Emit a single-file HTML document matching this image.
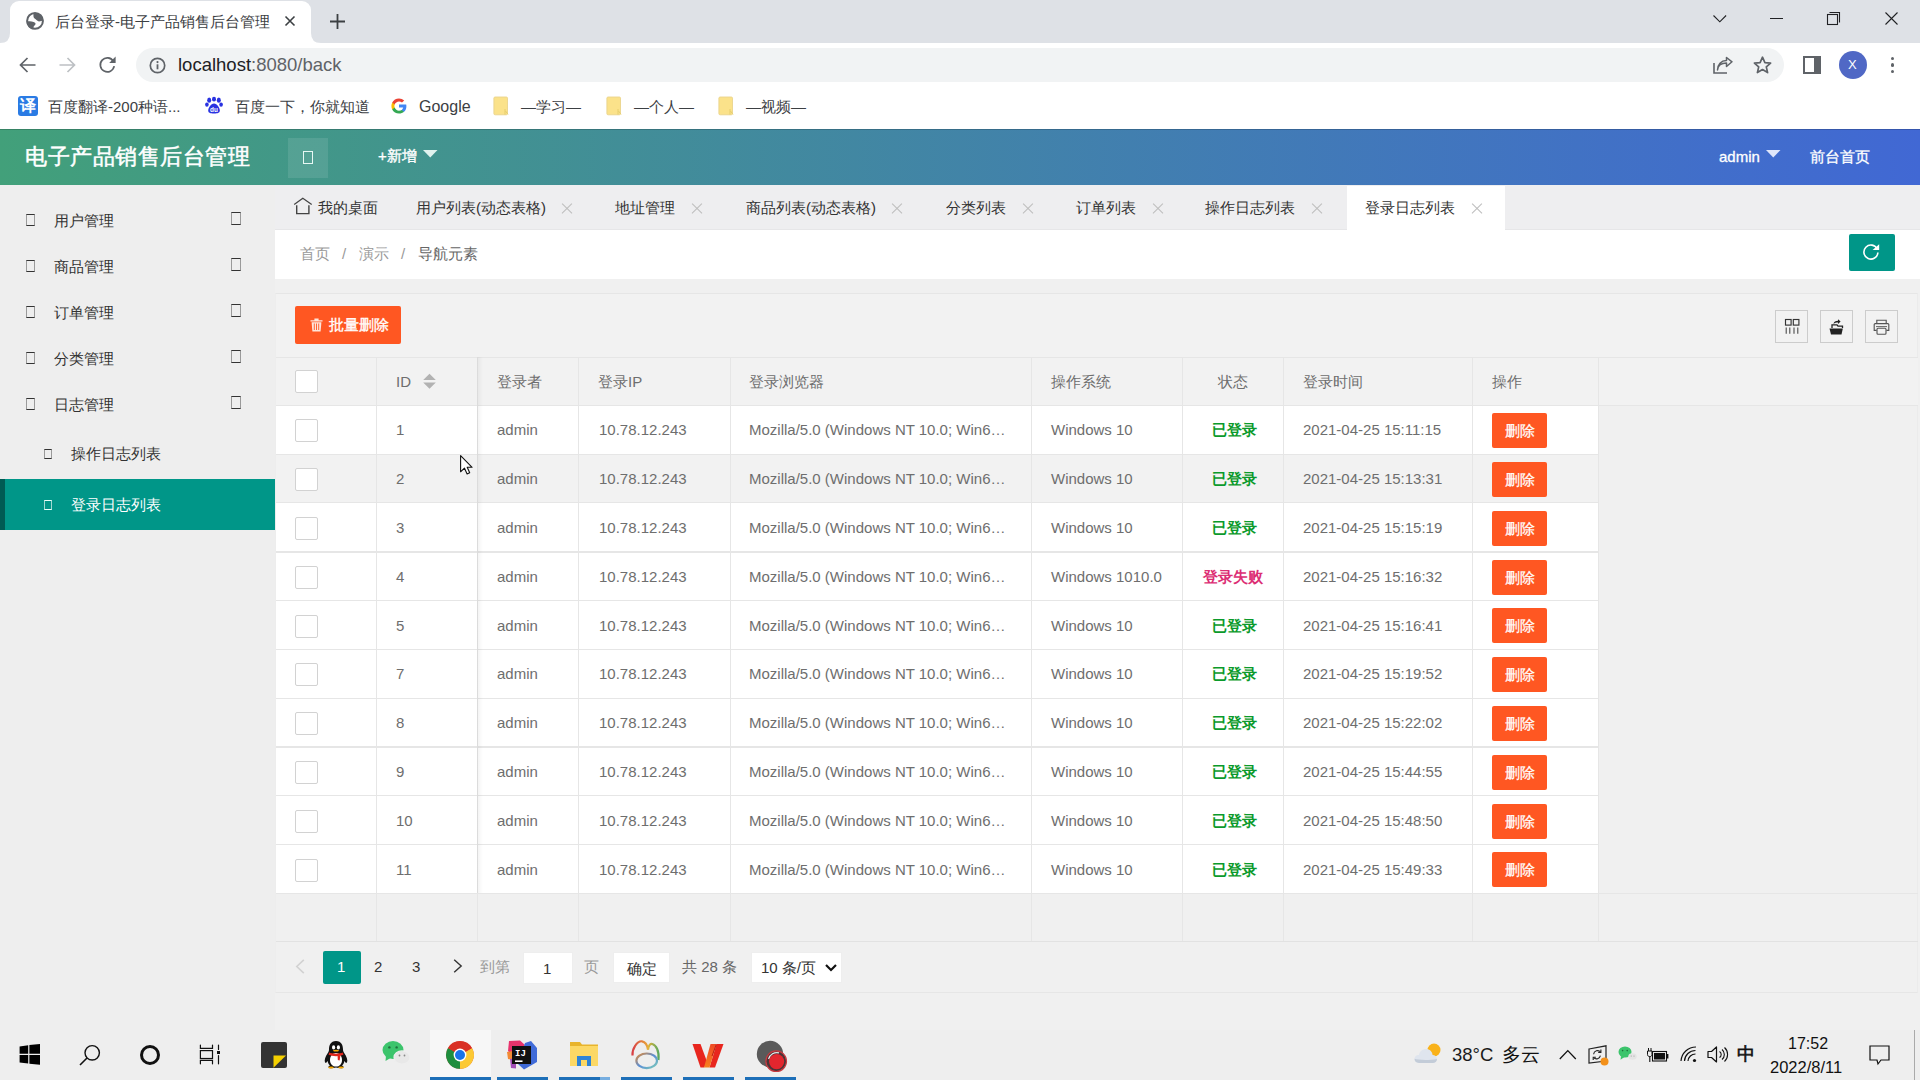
<!DOCTYPE html><html><head><meta charset="utf-8"><title>后台登录-电子产品销售后台管理</title><style>
*{box-sizing:border-box;margin:0;padding:0}
html,body{width:1920px;height:1080px;overflow:hidden;background:#f0f0f0}
body{position:relative;font-family:"Liberation Sans",sans-serif;color:#333}
.abs{position:absolute}
.t{position:absolute;white-space:nowrap;line-height:1}
svg{position:absolute;overflow:visible}
/* chrome */
#tabstrip{left:0;top:0;width:1920px;height:43px;background:#dee1e6}
#acttab{left:10px;top:1px;width:301px;height:42px;background:#fff;border-radius:9px 9px 0 0}
#toolbar{left:0;top:43px;width:1920px;height:44px;background:#fff}
#omni{left:136px;top:48px;width:1648px;height:34px;border-radius:17px;background:#f1f3f4}
#bmbar{left:0;top:87px;width:1920px;height:42px;background:#fff}
.ui{color:#3c4043}
/* header */
#hdr{left:0;top:129px;width:1920px;height:56px;background:linear-gradient(to right,#42a07a 0%,#4168d4 100%)}
#sidebar{left:0;top:185px;width:275px;height:845px;background:#eeeeee}
#tabbar{left:275px;top:185px;width:1645px;height:45px;background:#eeeef0;border-bottom:1px solid #e6e6e8}
#crumb{left:275px;top:230px;width:1645px;height:49px;background:#fff}
.x{position:absolute;width:12px;height:12px}
.x:before,.x:after{content:"";position:absolute;left:-1px;top:5.5px;width:14px;height:1.2px;background:#bdbdbd;transform:rotate(45deg)}
.x:after{transform:rotate(-45deg)}
.ibox{position:absolute;border-top:1.4px solid #333;border-bottom:1.4px solid #333;border-left:1.1px solid #9a9a9a;border-right:1.1px solid #9a9a9a}
/* table */
.cell{position:absolute;white-space:nowrap;font-size:15px;color:#6e6e6e;line-height:50px;height:50px}
.vl{position:absolute;width:1px;background:#e6e6e6}
.hl{position:absolute;height:1px;background:#e6e6e6}
.cb{position:absolute;width:23px;height:23px;background:#fff;border:1px solid #d2d2d2;border-radius:2px}
.del{position:absolute;width:55px;height:35px;background:#ff5722;border-radius:2px;color:#fff;font-size:15px;line-height:35px;text-align:center;-webkit-text-stroke:0.25px #fff}
.tb{position:absolute;width:33px;height:33px;border:1px solid #ccc}
</style></head><body>
<div id="tabstrip" class="abs"></div>
<div id="acttab" class="abs"></div>
<svg style="left:0;top:33px" width="12" height="10"><path d="M0 10 Q10 10 10 0 L10 10 Z" fill="#fff"/></svg>
<svg style="left:311px;top:33px" width="10" height="10"><path d="M0 0 Q0 10 10 10 L0 10 Z" fill="#fff"/></svg>
<svg style="left:26px;top:12px" width="18" height="18" viewBox="0 0 18 18"><circle cx="9" cy="8.9" r="7.9" stroke="#5f6368" stroke-width="2" fill="none"/><path d="M7.6 1.2 C7.2 3.5 7.4 5.8 8.6 6.6 C10 7.6 11.5 9.3 13 9.4 C14.5 9.4 16 9 17.4 8.6 C17 4.5 13.5 1 9 0.9 Z" fill="#5f6368"/><path d="M0.7 9.6 C2.8 9 5.6 9.1 7.6 9.9 C9.2 10.5 9.9 11.4 9.4 12.4 C8.6 13.6 7.4 14.2 7.4 15.4 L7.4 17.6 C3.6 16.9 0.8 13.6 0.7 9.6Z" fill="#5f6368"/></svg>
<div class="t" style="left:55px;top:14px;font-size:15px;color:#3c4043">后台登录-电子产品销售后台管理</div>
<svg style="left:285px;top:16px" width="10" height="10"><path d="M0.5 0.5L9.5 9.5M9.5 0.5L0.5 9.5" stroke="#3c4043" stroke-width="1.6"/></svg>
<svg style="left:330px;top:14px" width="15" height="15"><path d="M7.5 0V15M0 7.5H15" stroke="#3c4043" stroke-width="1.8"/></svg>
<svg style="left:1713px;top:15px" width="14" height="8"><path d="M0.5 0.5L6.8 6.8L13.1 0.5" stroke="#202124" stroke-width="1.1" fill="none"/></svg>
<div class="abs" style="left:1770px;top:18px;width:13px;height:1.2px;background:#202124"></div>
<svg style="left:1826px;top:11px" width="16" height="15"><path d="M3.5 1.5H13.5V11.5" stroke="#202124" stroke-width="1.1" fill="none"/><rect x="1.5" y="3.5" width="10" height="10" stroke="#202124" stroke-width="1.1" fill="none"/></svg>
<svg style="left:1885px;top:12px" width="13" height="13"><path d="M0.5 0.5L12.5 12.5M12.5 0.5L0.5 12.5" stroke="#202124" stroke-width="1.1"/></svg>
<div id="toolbar" class="abs"></div>
<div id="omni" class="abs"></div>
<svg style="left:19px;top:57px" width="17" height="16" viewBox="0 0 17 16"><path d="M16.5 8H2M8.5 1L1.5 8L8.5 15" stroke="#5f6368" stroke-width="1.7" fill="none"/></svg>
<svg style="left:59px;top:57px" width="17" height="16" viewBox="0 0 17 16"><path d="M0.5 8H15M8.5 1L15.5 8L8.5 15" stroke="#bdc0c4" stroke-width="1.7" fill="none"/></svg>
<svg style="left:99px;top:56px" width="18" height="17" viewBox="0 0 18 17"><path d="M14.3 5.2 A7 7 0 1 0 15.2 10.2" stroke="#5f6368" stroke-width="1.7" fill="none"/><path d="M16.6 0.6V7H10.2Z" fill="#5f6368"/></svg>
<svg style="left:149px;top:57px" width="17" height="17" viewBox="0 0 17 17"><circle cx="8.5" cy="8.5" r="7.2" stroke="#5f6368" stroke-width="1.7" fill="none"/><rect x="7.6" y="7.3" width="1.8" height="5" fill="#5f6368"/><circle cx="8.5" cy="5.1" r="1.1" fill="#5f6368"/></svg>
<div class="t" style="left:178px;top:56px;font-size:18.5px;color:#202124">localhost<span style="color:#5f6368">:8080/back</span></div>
<svg style="left:1713px;top:57px" width="20" height="17" viewBox="0 0 20 17"><path d="M1 6V16H14" stroke="#5f6368" stroke-width="1.6" fill="none"/><path d="M4.5 13 C5 8 8.5 6 13.5 6V9.5L19 4.8L13.5 0.5V3.6C8 3.6 4.6 7.5 4.5 13Z" stroke="#5f6368" stroke-width="1.5" fill="none" stroke-linejoin="round"/></svg>
<svg style="left:1753px;top:56px" width="19" height="18" viewBox="0 0 19 18"><path d="M9.5 1.2L11.9 6.6L17.6 7.1L13.3 10.9L14.6 16.6L9.5 13.6L4.4 16.6L5.7 10.9L1.4 7.1L7.1 6.6Z" stroke="#5f6368" stroke-width="1.7" fill="none" stroke-linejoin="round"/></svg>
<svg style="left:1803px;top:56px" width="18" height="18" viewBox="0 0 18 18"><rect x="1" y="1" width="16" height="16" stroke="#5f6368" stroke-width="2" fill="none"/><rect x="11" y="1" width="6" height="16" fill="#5f6368"/></svg>
<div class="abs" style="left:1839px;top:51px;width:28px;height:28px;border-radius:50%;background:#5068c5"></div>
<div class="t" style="left:1848px;top:58px;font-size:13px;color:#fff">X</div>
<div class="abs" style="left:1890.8px;top:56.900000000000006px;width:3.6px;height:3.6px;border-radius:50%;background:#5f6368"></div>
<div class="abs" style="left:1890.8px;top:63.2px;width:3.6px;height:3.6px;border-radius:50%;background:#5f6368"></div>
<div class="abs" style="left:1890.8px;top:69.60000000000001px;width:3.6px;height:3.6px;border-radius:50%;background:#5f6368"></div>
<div id="bmbar" class="abs"></div>
<div class="abs" style="left:18px;top:96px;width:20px;height:20px;border-radius:3px;background:#2a7be4"></div>
<div class="t" style="left:20px;top:98px;font-size:16px;color:#fff;font-weight:bold">译</div>
<div class="t" style="left:48px;top:99px;font-size:15px;color:#3c4043">百度翻译-200种语...</div>
<svg style="left:205px;top:97px" width="18" height="17" viewBox="0 0 18 17"><ellipse cx="4.2" cy="3.2" rx="2" ry="2.6" fill="#2932e1"/><ellipse cx="9" cy="2.2" rx="2" ry="2.4" fill="#2932e1"/><ellipse cx="13.8" cy="3.2" rx="2" ry="2.6" fill="#2932e1"/><ellipse cx="1.9" cy="7.6" rx="1.8" ry="2.2" fill="#2932e1"/><ellipse cx="16.1" cy="7.6" rx="1.8" ry="2.2" fill="#2932e1"/><path d="M9 6.6C6 6.6 3.2 11 3.2 13.6C3.2 15.8 5 16.6 9 16.6C13 16.6 14.8 15.8 14.8 13.6C14.8 11 12 6.6 9 6.6Z" fill="#2932e1"/><text x="9" y="15" font-size="6.4" fill="#fff" text-anchor="middle" font-family="Liberation Sans" font-weight="bold">du</text></svg>
<div class="t" style="left:235px;top:99px;font-size:15px;color:#3c4043">百度一下，你就知道</div>
<svg style="left:391px;top:98px" width="16" height="16" viewBox="0 0 16 16"><path d="M15.4 8.2c0-.6-.1-1.1-.2-1.6H8v3h4.2c-.2 1-.7 1.8-1.5 2.3v1.9h2.4c1.4-1.3 2.3-3.2 2.3-5.6z" fill="#4285f4"/><path d="M8 15.6c2 0 3.8-.7 5-1.8l-2.4-1.9c-.7.5-1.5.8-2.6.8-2 0-3.7-1.3-4.3-3.2H1.2v2C2.5 14 5 15.6 8 15.6z" fill="#34a853"/><path d="M3.7 9.5c-.2-.5-.3-1-.3-1.5s.1-1 .3-1.5v-2H1.2C.7 5.5.4 6.7.4 8s.3 2.5.8 3.5l2.5-2z" fill="#fbbc05"/><path d="M8 3.4c1.1 0 2.2.4 3 1.2l2.2-2.2C11.8 1.1 10 .4 8 .4 5 .4 2.5 2 1.2 4.5l2.5 2C4.3 4.7 6 3.4 8 3.4z" fill="#ea4335"/></svg>
<div class="t" style="left:419px;top:99px;font-size:16px;color:#3c4043">Google</div>
<svg style="left:493px;top:96px" width="17" height="20" viewBox="0 0 17 20"><rect x="0.9" y="1" width="13.6" height="17.8" rx="1.2" fill="#fbe28a" stroke="#ead48c" stroke-width="0.9"/><path d="M12 13V18.6M12.5 15L15 18.4" stroke="#e3cc6a" stroke-width="0.9" fill="none"/></svg>
<div class="t" style="left:521px;top:99px;font-size:15px;color:#3c4043">—学习—</div>
<svg style="left:606px;top:96px" width="17" height="20" viewBox="0 0 17 20"><rect x="0.9" y="1" width="13.6" height="17.8" rx="1.2" fill="#fbe28a" stroke="#ead48c" stroke-width="0.9"/><path d="M12 13V18.6M12.5 15L15 18.4" stroke="#e3cc6a" stroke-width="0.9" fill="none"/></svg>
<div class="t" style="left:634px;top:99px;font-size:15px;color:#3c4043">—个人—</div>
<svg style="left:718px;top:96px" width="17" height="20" viewBox="0 0 17 20"><rect x="0.9" y="1" width="13.6" height="17.8" rx="1.2" fill="#fbe28a" stroke="#ead48c" stroke-width="0.9"/><path d="M12 13V18.6M12.5 15L15 18.4" stroke="#e3cc6a" stroke-width="0.9" fill="none"/></svg>
<div class="t" style="left:746px;top:99px;font-size:15px;color:#3c4043">—视频—</div>
<div id="hdr" class="abs"></div>
<div class="abs" style="left:0;top:129px;width:1920px;height:1px;background:rgba(0,0,0,0.18)"></div>
<div class="t" style="left:25px;top:146px;font-size:22px;letter-spacing:0.5px;-webkit-text-stroke:0.5px #fff;color:#fff">电子产品销售后台管理</div>
<div class="abs" style="left:288px;top:138px;width:40px;height:40px;background:rgba(255,255,255,0.1)"></div>
<div class="abs" style="left:303px;top:151px;width:10px;height:13px;border:1.3px solid #e8f8f4"></div>
<div class="t" style="left:378px;top:148px;font-size:15px;color:#fff;-webkit-text-stroke:0.35px #fff">+新增</div>
<svg style="left:423px;top:150px" width="15" height="8"><path d="M0 0H14.5L7.25 7.5Z" fill="#e0f2ee"/></svg>
<div class="t" style="left:1719px;top:149px;font-size:15px;color:#fff;-webkit-text-stroke:0.3px #fff">admin</div>
<svg style="left:1766px;top:150px" width="15" height="8"><path d="M0 0H14.5L7.25 7.5Z" fill="#dfe6fa"/></svg>
<div class="t" style="left:1810px;top:149px;font-size:15px;color:#fff;-webkit-text-stroke:0.3px #fff">前台首页</div>
<div id="sidebar" class="abs"></div>
<div class="ibox" style="left:26px;top:214px;width:9px;height:12px"></div>
<div class="t" style="left:54px;top:213px;font-size:15px;color:#333">用户管理</div>
<div class="ibox" style="left:231px;top:212px;width:10px;height:12.5px"></div>
<div class="ibox" style="left:26px;top:260px;width:9px;height:12px"></div>
<div class="t" style="left:54px;top:259px;font-size:15px;color:#333">商品管理</div>
<div class="ibox" style="left:231px;top:258px;width:10px;height:12.5px"></div>
<div class="ibox" style="left:26px;top:306px;width:9px;height:12px"></div>
<div class="t" style="left:54px;top:305px;font-size:15px;color:#333">订单管理</div>
<div class="ibox" style="left:231px;top:304px;width:10px;height:12.5px"></div>
<div class="ibox" style="left:26px;top:352px;width:9px;height:12px"></div>
<div class="t" style="left:54px;top:351px;font-size:15px;color:#333">分类管理</div>
<div class="ibox" style="left:231px;top:350px;width:10px;height:12.5px"></div>
<div class="ibox" style="left:26px;top:398px;width:9px;height:12px"></div>
<div class="t" style="left:54px;top:397px;font-size:15px;color:#333">日志管理</div>
<div class="ibox" style="left:231px;top:396px;width:10px;height:12.5px"></div>
<div class="ibox" style="left:44px;top:449px;width:8px;height:10px"></div>
<div class="t" style="left:71px;top:446px;font-size:15px;color:#333">操作日志列表</div>
<div class="abs" style="left:0;top:479px;width:275px;height:51px;background:#009688"></div>
<div class="abs" style="left:0;top:479px;width:5px;height:51px;background:#005b53"></div>
<div class="ibox" style="left:44px;top:500px;width:8px;height:10px;border-top-color:#e6fffb;border-bottom-color:#e6fffb;border-left-color:#9fd8d0;border-right-color:#9fd8d0"></div>
<div class="t" style="left:71px;top:497px;font-size:15px;color:#fff">登录日志列表</div>
<div id="tabbar" class="abs"></div>
<div class="abs" style="left:1347px;top:186px;width:158px;height:45px;background:#fff"></div>
<svg style="left:293px;top:197px" width="20" height="18" viewBox="0 0 20 18"><path d="M1.2 7.4L9.8 1.2L18.7 7.4" stroke="#444" stroke-width="1.25" fill="none"/><path d="M3.7 8.3V16.6H15.9V8.3" stroke="#444" stroke-width="1.4" fill="none"/></svg>
<div class="t" style="left:318px;top:200px;font-size:15px;color:#333">我的桌面</div>
<div class="t" style="left:416px;top:200px;font-size:15px;color:#333">用户列表(动态表格)</div>
<div class="x" style="left:560.5px;top:202px"></div>
<div class="t" style="left:615px;top:200px;font-size:15px;color:#333">地址管理</div>
<div class="x" style="left:691px;top:202px"></div>
<div class="t" style="left:746px;top:200px;font-size:15px;color:#333">商品列表(动态表格)</div>
<div class="x" style="left:891px;top:202px"></div>
<div class="t" style="left:946px;top:200px;font-size:15px;color:#333">分类列表</div>
<div class="x" style="left:1021.5px;top:202px"></div>
<div class="t" style="left:1076px;top:200px;font-size:15px;color:#333">订单列表</div>
<div class="x" style="left:1151.5px;top:202px"></div>
<div class="t" style="left:1205px;top:200px;font-size:15px;color:#333">操作日志列表</div>
<div class="x" style="left:1311px;top:202px"></div>
<div class="t" style="left:1365px;top:200px;font-size:15px;color:#333">登录日志列表</div>
<div class="x" style="left:1471px;top:202px"></div>
<div id="crumb" class="abs"></div>
<div class="t" style="left:300px;top:246px;font-size:15px;color:#999">首页</div>
<div class="t" style="left:342px;top:246px;font-size:15px;color:#999">/</div>
<div class="t" style="left:359px;top:246px;font-size:15px;color:#999">演示</div>
<div class="t" style="left:401px;top:246px;font-size:15px;color:#999">/</div>
<div class="t" style="left:418px;top:246px;font-size:15px;color:#666">导航元素</div>
<div class="abs" style="left:1849px;top:234px;width:46px;height:37px;background:#009688;border-radius:2px"></div>
<svg style="left:1862px;top:243px" width="18" height="18" viewBox="0 0 18 18"><path d="M15.2 6 A7 7 0 1 0 15.9 9.5" stroke="#fff" stroke-width="1.6" fill="none"/><path d="M10.6 6.9L17.2 1.2V6.9Z" fill="#fff"/></svg>
<div class="abs" style="left:275px;top:293px;width:1643px;height:700px;border:1px solid #e6e6e6;border-left-color:#ededed;border-right-color:#ebebeb;background:#f0f0f0"></div>
<div class="abs" style="left:276px;top:294px;width:1641px;height:63px;background:#f2f2f2"></div>
<div class="abs" style="left:295px;top:306px;width:106px;height:38px;background:#ff5722;border-radius:2px"></div>
<svg style="left:310px;top:318px" width="13" height="14" viewBox="0 0 13 14"><path d="M0.5 2.2H12.5V3.6H0.5Z M4.4 0.6H8.6V2.2H4.4Z" fill="#ffe5da"/><path d="M1.6 4.2H11.4L10.6 13.4H2.4Z" fill="#ffe5da"/><path d="M4.3 5.5V12M6.5 5.5V12M8.7 5.5V12" stroke="#ff5722" stroke-width="0.9"/></svg>
<div class="t" style="left:329px;top:317px;font-size:15px;color:#fff;-webkit-text-stroke:0.35px #fff">批量删除</div>
<div class="tb" style="left:1775px;top:310px"></div>
<div class="tb" style="left:1820px;top:310px"></div>
<div class="tb" style="left:1865px;top:310px"></div>
<svg style="left:1784px;top:318px" width="16" height="17" viewBox="0 0 16 17"><rect x="1.5" y="1.5" width="5.6" height="5.6" stroke="#333" stroke-width="1.15" fill="none"/><rect x="9.3" y="1.5" width="5.6" height="5.6" stroke="#333" stroke-width="1.15" fill="none"/><path d="M2.2 9.6V15.8M5.8 9.6V15.8M10 9.6V15.8M13.8 9.6V15.8" stroke="#444" stroke-width="1.05"/></svg>
<svg style="left:1829px;top:319px" width="15" height="16" viewBox="0 0 15 16"><path d="M0.5 9.5H13.8L12.5 15.5H2Z" fill="#222"/><path d="M3 9V5.8H8L9 7.2H13.5V9" stroke="#222" stroke-width="1.3" fill="none"/><path d="M4.5 5 C4.8 2.6 6.6 1.8 9 1.8V0.3L11.6 2.6L9 4.9V3.4C7.2 3.4 5.8 3.8 4.5 5Z" fill="#222"/></svg>
<svg style="left:1873px;top:319px" width="17" height="16" viewBox="0 0 17 16"><path d="M3.8 4.6V1.2H13.2V4.6" stroke="#555" stroke-width="1.15" fill="none"/><path d="M3.6 11.4H1.2V5.6C1.2 5 1.6 4.6 2.2 4.6H14.8C15.4 4.6 15.8 5 15.8 5.6V11.4H13.4" stroke="#555" stroke-width="1.15" fill="none"/><rect x="4" y="9.2" width="9" height="6" rx="1" stroke="#555" stroke-width="1.15" fill="none"/><path d="M3 7.6H14" stroke="#555" stroke-width="0.9"/></svg>
<div class="hl" style="left:276px;top:357px;width:1642px"></div>
<div class="abs" style="left:276px;top:358px;width:1642px;height:47.30000000000001px;background:#f2f2f2"></div>
<div class="abs" style="left:276px;top:405.30px;width:1322px;height:48.80px;background:#fff"></div>
<div class="abs" style="left:276px;top:454.10px;width:1322px;height:48.80px;background:#f2f2f2"></div>
<div class="abs" style="left:276px;top:502.90px;width:1322px;height:48.80px;background:#fff"></div>
<div class="abs" style="left:276px;top:551.70px;width:1322px;height:48.80px;background:#fff"></div>
<div class="abs" style="left:276px;top:600.50px;width:1322px;height:48.80px;background:#fff"></div>
<div class="abs" style="left:276px;top:649.30px;width:1322px;height:48.80px;background:#fff"></div>
<div class="abs" style="left:276px;top:698.10px;width:1322px;height:48.80px;background:#fff"></div>
<div class="abs" style="left:276px;top:746.90px;width:1322px;height:48.80px;background:#fff"></div>
<div class="abs" style="left:276px;top:795.70px;width:1322px;height:48.80px;background:#fff"></div>
<div class="abs" style="left:276px;top:844.50px;width:1322px;height:48.80px;background:#fff"></div>
<div class="hl" style="left:276px;top:404.80px;width:1642px;height:1px"></div>
<div class="hl" style="left:276px;top:453.60px;width:1322px;height:1px"></div>
<div class="hl" style="left:276px;top:502.40px;width:1322px;height:1px"></div>
<div class="hl" style="left:276px;top:551.20px;width:1322px;height:2px"></div>
<div class="hl" style="left:276px;top:600.00px;width:1322px;height:1px"></div>
<div class="hl" style="left:276px;top:648.80px;width:1322px;height:1px"></div>
<div class="hl" style="left:276px;top:697.60px;width:1322px;height:1px"></div>
<div class="hl" style="left:276px;top:746.40px;width:1322px;height:2px"></div>
<div class="hl" style="left:276px;top:795.20px;width:1322px;height:1px"></div>
<div class="hl" style="left:276px;top:844.00px;width:1322px;height:1px"></div>
<div class="hl" style="left:276px;top:892.80px;width:1642px;height:1px"></div>
<div class="hl" style="left:276px;top:941px;width:1642px;background:#e2e2e2"></div>
<div class="vl" style="left:376px;top:357px;height:584px"></div>
<div class="vl" style="left:477px;top:357px;height:584px"></div>
<div class="vl" style="left:578px;top:357px;height:584px"></div>
<div class="vl" style="left:730px;top:357px;height:584px"></div>
<div class="vl" style="left:1031px;top:357px;height:584px"></div>
<div class="vl" style="left:1182px;top:357px;height:584px"></div>
<div class="vl" style="left:1283px;top:357px;height:584px"></div>
<div class="vl" style="left:1472px;top:357px;height:584px"></div>
<div class="vl" style="left:1598px;top:357px;height:584px"></div>
<div class="abs" style="left:477px;top:357px;width:6px;height:536.30px;background:linear-gradient(to right,rgba(0,0,0,0.05),rgba(0,0,0,0))"></div>
<div class="cb" style="left:295px;top:370px"></div>
<div class="cell" style="left:396px;top:358px;line-height:48px">ID</div>
<div class="cell" style="left:497px;top:358px;line-height:48px">登录者</div>
<div class="cell" style="left:598px;top:358px;line-height:48px">登录IP</div>
<div class="cell" style="left:749px;top:358px;line-height:48px">登录浏览器</div>
<div class="cell" style="left:1051px;top:358px;line-height:48px">操作系统</div>
<div class="cell" style="left:1218px;top:358px;line-height:48px">状态</div>
<div class="cell" style="left:1303px;top:358px;line-height:48px">登录时间</div>
<div class="cell" style="left:1492px;top:358px;line-height:48px">操作</div>
<svg style="left:423px;top:373px" width="13" height="17"><path d="M6.5 0.8L12.8 7H0.2Z M0.2 9.5H12.8L6.5 15.8Z" fill="#b2b2b2"/></svg>
<div class="cb" style="left:295px;top:419.30px"></div>
<div class="cell" style="left:396px;top:405.30px">1</div>
<div class="cell" style="left:497px;top:405.30px">admin</div>
<div class="cell" style="left:599px;top:405.30px">10.78.12.243</div>
<div class="cell" style="left:749px;top:405.30px">Mozilla/5.0 (Windows NT 10.0; Win6…</div>
<div class="cell" style="left:1051px;top:405.30px">Windows 10</div>
<div class="cell" style="left:1212px;top:405.30px;color:#0b9a2b;font-weight:bold">已登录</div>
<div class="cell" style="left:1303px;top:405.30px">2021-04-25 15:11:15</div>
<div class="del" style="left:1492px;top:413.10px">删除</div>
<div class="cb" style="left:295px;top:468.10px"></div>
<div class="cell" style="left:396px;top:454.10px">2</div>
<div class="cell" style="left:497px;top:454.10px">admin</div>
<div class="cell" style="left:599px;top:454.10px">10.78.12.243</div>
<div class="cell" style="left:749px;top:454.10px">Mozilla/5.0 (Windows NT 10.0; Win6…</div>
<div class="cell" style="left:1051px;top:454.10px">Windows 10</div>
<div class="cell" style="left:1212px;top:454.10px;color:#0b9a2b;font-weight:bold">已登录</div>
<div class="cell" style="left:1303px;top:454.10px">2021-04-25 15:13:31</div>
<div class="del" style="left:1492px;top:461.90px">删除</div>
<div class="cb" style="left:295px;top:516.90px"></div>
<div class="cell" style="left:396px;top:502.90px">3</div>
<div class="cell" style="left:497px;top:502.90px">admin</div>
<div class="cell" style="left:599px;top:502.90px">10.78.12.243</div>
<div class="cell" style="left:749px;top:502.90px">Mozilla/5.0 (Windows NT 10.0; Win6…</div>
<div class="cell" style="left:1051px;top:502.90px">Windows 10</div>
<div class="cell" style="left:1212px;top:502.90px;color:#0b9a2b;font-weight:bold">已登录</div>
<div class="cell" style="left:1303px;top:502.90px">2021-04-25 15:15:19</div>
<div class="del" style="left:1492px;top:510.70px">删除</div>
<div class="cb" style="left:295px;top:565.70px"></div>
<div class="cell" style="left:396px;top:551.70px">4</div>
<div class="cell" style="left:497px;top:551.70px">admin</div>
<div class="cell" style="left:599px;top:551.70px">10.78.12.243</div>
<div class="cell" style="left:749px;top:551.70px">Mozilla/5.0 (Windows NT 10.0; Win6…</div>
<div class="cell" style="left:1051px;top:551.70px">Windows 1010.0</div>
<div class="cell" style="left:1203px;top:551.70px;color:#dc2e74;font-weight:bold">登录失败</div>
<div class="cell" style="left:1303px;top:551.70px">2021-04-25 15:16:32</div>
<div class="del" style="left:1492px;top:559.50px">删除</div>
<div class="cb" style="left:295px;top:614.50px"></div>
<div class="cell" style="left:396px;top:600.50px">5</div>
<div class="cell" style="left:497px;top:600.50px">admin</div>
<div class="cell" style="left:599px;top:600.50px">10.78.12.243</div>
<div class="cell" style="left:749px;top:600.50px">Mozilla/5.0 (Windows NT 10.0; Win6…</div>
<div class="cell" style="left:1051px;top:600.50px">Windows 10</div>
<div class="cell" style="left:1212px;top:600.50px;color:#0b9a2b;font-weight:bold">已登录</div>
<div class="cell" style="left:1303px;top:600.50px">2021-04-25 15:16:41</div>
<div class="del" style="left:1492px;top:608.30px">删除</div>
<div class="cb" style="left:295px;top:663.30px"></div>
<div class="cell" style="left:396px;top:649.30px">7</div>
<div class="cell" style="left:497px;top:649.30px">admin</div>
<div class="cell" style="left:599px;top:649.30px">10.78.12.243</div>
<div class="cell" style="left:749px;top:649.30px">Mozilla/5.0 (Windows NT 10.0; Win6…</div>
<div class="cell" style="left:1051px;top:649.30px">Windows 10</div>
<div class="cell" style="left:1212px;top:649.30px;color:#0b9a2b;font-weight:bold">已登录</div>
<div class="cell" style="left:1303px;top:649.30px">2021-04-25 15:19:52</div>
<div class="del" style="left:1492px;top:657.10px">删除</div>
<div class="cb" style="left:295px;top:712.10px"></div>
<div class="cell" style="left:396px;top:698.10px">8</div>
<div class="cell" style="left:497px;top:698.10px">admin</div>
<div class="cell" style="left:599px;top:698.10px">10.78.12.243</div>
<div class="cell" style="left:749px;top:698.10px">Mozilla/5.0 (Windows NT 10.0; Win6…</div>
<div class="cell" style="left:1051px;top:698.10px">Windows 10</div>
<div class="cell" style="left:1212px;top:698.10px;color:#0b9a2b;font-weight:bold">已登录</div>
<div class="cell" style="left:1303px;top:698.10px">2021-04-25 15:22:02</div>
<div class="del" style="left:1492px;top:705.90px">删除</div>
<div class="cb" style="left:295px;top:760.90px"></div>
<div class="cell" style="left:396px;top:746.90px">9</div>
<div class="cell" style="left:497px;top:746.90px">admin</div>
<div class="cell" style="left:599px;top:746.90px">10.78.12.243</div>
<div class="cell" style="left:749px;top:746.90px">Mozilla/5.0 (Windows NT 10.0; Win6…</div>
<div class="cell" style="left:1051px;top:746.90px">Windows 10</div>
<div class="cell" style="left:1212px;top:746.90px;color:#0b9a2b;font-weight:bold">已登录</div>
<div class="cell" style="left:1303px;top:746.90px">2021-04-25 15:44:55</div>
<div class="del" style="left:1492px;top:754.70px">删除</div>
<div class="cb" style="left:295px;top:809.70px"></div>
<div class="cell" style="left:396px;top:795.70px">10</div>
<div class="cell" style="left:497px;top:795.70px">admin</div>
<div class="cell" style="left:599px;top:795.70px">10.78.12.243</div>
<div class="cell" style="left:749px;top:795.70px">Mozilla/5.0 (Windows NT 10.0; Win6…</div>
<div class="cell" style="left:1051px;top:795.70px">Windows 10</div>
<div class="cell" style="left:1212px;top:795.70px;color:#0b9a2b;font-weight:bold">已登录</div>
<div class="cell" style="left:1303px;top:795.70px">2021-04-25 15:48:50</div>
<div class="del" style="left:1492px;top:803.50px">删除</div>
<div class="cb" style="left:295px;top:858.50px"></div>
<div class="cell" style="left:396px;top:844.50px">11</div>
<div class="cell" style="left:497px;top:844.50px">admin</div>
<div class="cell" style="left:599px;top:844.50px">10.78.12.243</div>
<div class="cell" style="left:749px;top:844.50px">Mozilla/5.0 (Windows NT 10.0; Win6…</div>
<div class="cell" style="left:1051px;top:844.50px">Windows 10</div>
<div class="cell" style="left:1212px;top:844.50px;color:#0b9a2b;font-weight:bold">已登录</div>
<div class="cell" style="left:1303px;top:844.50px">2021-04-25 15:49:33</div>
<div class="del" style="left:1492px;top:852.30px">删除</div>
<svg style="left:295px;top:959px" width="10" height="15"><path d="M8.8 0.8L1.8 7.5L8.8 14.2" stroke="#d2d2d2" stroke-width="1.6" fill="none"/></svg>
<div class="abs" style="left:323px;top:951px;width:38px;height:33px;background:#009688;border-radius:2px"></div>
<div class="t" style="left:337px;top:959px;font-size:15px;color:#fff">1</div>
<div class="t" style="left:374px;top:958.6px;font-size:15px;color:#333">2</div>
<div class="t" style="left:412px;top:958.6px;font-size:15px;color:#333">3</div>
<svg style="left:453px;top:959px" width="10" height="15"><path d="M1.2 0.8L8.2 7 L1.2 13.2" stroke="#333" stroke-width="1.4" fill="none"/></svg>
<div class="t" style="left:480px;top:959px;font-size:15px;color:#999">到第</div>
<div class="abs" style="left:523px;top:952px;width:50px;height:32px;background:#fff;border:1px solid #eee"></div>
<div class="t" style="left:543px;top:961px;font-size:15px;color:#333">1</div>
<div class="t" style="left:584px;top:959px;font-size:15px;color:#999">页</div>
<div class="abs" style="left:613px;top:952px;width:57px;height:31px;background:#fff;border:1px solid #eee"></div>
<div class="t" style="left:627px;top:961px;font-size:15px;color:#333">确定</div>
<div class="t" style="left:682px;top:959px;font-size:15px;color:#666">共 28 条</div>
<div class="abs" style="left:751px;top:952px;width:91px;height:31px;background:#fff;border:1px solid #eee"></div>
<div class="t" style="left:761px;top:960px;font-size:15px;color:#333">10 条/页</div>
<svg style="left:825px;top:964px" width="12" height="8"><path d="M1 1L6 6L11 1" stroke="#111" stroke-width="2.2" fill="none"/></svg>
<svg style="left:460px;top:455px" width="14" height="21" viewBox="0 0 14 21"><path d="M0.6 0.6V16.8L4.4 13.1L7.1 18.9L9.7 17.8L7.2 12.3H12.1Z" fill="#fff" stroke="#111" stroke-width="1.1" stroke-linejoin="round"/></svg>
<div class="abs" style="left:0;top:1030px;width:1920px;height:50px;background:#eeeeee"></div>
<svg style="left:19px;top:1044px" width="22" height="21" viewBox="0 0 22 21"><path d="M0.6 2.4L9.2 1.2V9.8H0.6Z M10.4 1L21 0V9.8H10.4Z M0.6 11H9.2V19.6L0.6 18.5Z M10.4 11H21V20.8L10.4 19.7Z" fill="#000"/></svg>
<svg style="left:79px;top:1044px" width="22" height="22" viewBox="0 0 22 22"><circle cx="13.2" cy="8.8" r="7.2" stroke="#111" stroke-width="1.4" fill="none"/><path d="M8 14L1 21" stroke="#111" stroke-width="1.6"/></svg>
<div class="abs" style="left:140px;top:1045px;width:20px;height:20px;border-radius:50%;border:3px solid #111"></div>
<svg style="left:199px;top:1044px" width="22" height="21" viewBox="0 0 22 21"><path d="M1.4 1.1V4.3H13.5V1.1M1.4 19.8V16.4H13.5V19.8M19.5 1.1V5.5M19.5 11.5V19.8" stroke="#111" stroke-width="1.2" fill="none" stroke-linecap="round"/><rect x="1.4" y="6.6" width="12.1" height="7.9" stroke="#111" stroke-width="1.2" fill="none"/><rect x="18" y="7" width="3" height="3" fill="#111"/></svg>
<div class="abs" style="left:261px;top:1042px;width:26px;height:26px;border-radius:2px;background:#333"></div>
<svg style="left:273px;top:1055px" width="14" height="13"><path d="M0.5 0.5H13L0.5 12.8Z" fill="#f5d000"/></svg>
<svg style="left:323px;top:1040px" width="26" height="29" viewBox="0 0 26 29"><path d="M13 1C7.5 1 6 5.5 6 9.5C6 11 5.5 12 4.5 13.5C2.5 16.5 1 20 2 22.5C2.8 23.5 4 22 4.6 21C5 23 5.8 24.6 7 25.6C5.6 26.2 5 27 5.8 27.8C7 28.6 10 28.4 13 27.6C16 28.4 19 28.6 20.2 27.8C21 27 20.4 26.2 19 25.6C20.2 24.6 21 23 21.4 21C22 22 23.2 23.5 24 22.5C25 20 23.5 16.5 21.5 13.5C20.5 12 20 11 20 9.5C20 5.5 18.5 1 13 1Z" fill="#111"/><path d="M13 13C9.5 13 7 16 7 20C7 24 9.5 26.6 13 26.6C16.5 26.6 19 24 19 20C19 16 16.5 13 13 13Z" fill="#fff"/><path d="M6.2 12.6C9 14 17 14 19.8 12.6L20.4 14.8C17 16.6 9 16.6 5.6 14.8Z" fill="#e0251b"/><path d="M14.5 15L17.5 15.2L16.6 20.5L14.8 20Z" fill="#e0251b"/><ellipse cx="10.6" cy="7.4" rx="1.6" ry="2.1" fill="#fff"/><ellipse cx="15.4" cy="7.4" rx="1.6" ry="2.1" fill="#fff"/><path d="M9.8 10.4C11.5 9.6 14.5 9.6 16.2 10.4C15.2 12 10.8 12 9.8 10.4Z" fill="#f5a800"/><ellipse cx="8" cy="27.6" rx="2.8" ry="1" fill="#f5a800"/><ellipse cx="18" cy="27.6" rx="2.8" ry="1" fill="#f5a800"/></svg>
<svg style="left:382px;top:1040px" width="28" height="26" viewBox="0 0 28 26"><ellipse cx="11" cy="10" rx="10.5" ry="9" fill="#3cc46c"/><path d="M4 16L3.5 21L8.5 18Z" fill="#3cc46c"/><circle cx="7.4" cy="7.4" r="1.2" fill="#1e6e3c"/><circle cx="14.6" cy="7.4" r="1.2" fill="#1e6e3c"/><ellipse cx="20" cy="17.5" rx="8" ry="6.6" fill="#e8e8e8" stroke="#eeeeee" stroke-width="1.2"/><circle cx="17.5" cy="15.5" r="0.9" fill="#888"/><circle cx="22.5" cy="15.5" r="0.9" fill="#888"/></svg>
<div class="abs" style="left:430px;top:1030px;width:61px;height:50px;background:#f7f7f7"></div>
<div class="abs" style="left:430px;top:1077px;width:61px;height:3px;background:#1d6fb8"></div>
<div class="abs" style="left:497px;top:1077px;width:51px;height:3px;background:#1d6fb8"></div>
<div class="abs" style="left:559px;top:1077px;width:41px;height:3px;background:#1d6fb8"></div>
<div class="abs" style="left:621px;top:1077px;width:51px;height:3px;background:#1d6fb8"></div>
<div class="abs" style="left:683px;top:1077px;width:51px;height:3px;background:#1d6fb8"></div>
<div class="abs" style="left:745px;top:1077px;width:51px;height:3px;background:#1d6fb8"></div>
<div class="abs" style="left:600px;top:1077px;width:10px;height:3px;background:#77aee0"></div>
<svg style="left:446px;top:1041px" width="28" height="28" viewBox="0 0 28 28"><circle cx="14" cy="14" r="13.8" fill="#db4437"/><path d="M14 14L26 7A13.8 13.8 0 0 1 14 27.8Z" fill="#fcc934"/><path d="M14 14L14 27.8A13.8 13.8 0 0 1 2 7Z" fill="#1e8e3e"/><path d="M2 7L14 14L26 7A13.8 13.8 0 0 0 2 7Z" fill="#d93025"/><circle cx="14" cy="14" r="6.4" fill="#fff"/><circle cx="14" cy="14" r="5" fill="#1a73e8"/></svg>
<svg style="left:506px;top:1040px" width="32" height="30" viewBox="0 0 32 30"><path d="M3 1L14 0.5L19 5L8 17L2 11Z" fill="#e8336c"/><path d="M19 3L25 1L31 8L31 22L18 29.5L12 24Z" fill="#3f6ad8"/><path d="M1 12L7 11L7 20L2 19Z" fill="#f28a35"/><path d="M4 19L10 18L10 28.5L5 28Z" fill="#a24fb8"/><rect x="6" y="6" width="19" height="18" fill="#111"/><text x="9" y="15.6" font-size="9" fill="#fff" font-family="Liberation Mono" font-weight="bold">IJ</text><rect x="9" y="20.4" width="7.5" height="1.6" fill="#fff"/></svg>
<svg style="left:569px;top:1041px" width="30" height="26" viewBox="0 0 30 26"><path d="M1 1H11L13 3.5H29V25H1Z" fill="#e8b42c"/><path d="M1 5H29V25H1Z" fill="#fcd865"/><path d="M8 25V15H22V25H18V19H12V25Z" fill="#2f84d6"/></svg>
<svg style="left:631px;top:1039px" width="30" height="31" viewBox="0 0 30 31"><defs><linearGradient id="nv1" x1="0" y1="0" x2="1" y2="0"><stop offset="0" stop-color="#d83f45"/><stop offset="1" stop-color="#e9a93a"/></linearGradient><linearGradient id="nv2" x1="0" y1="0" x2="1" y2="0"><stop offset="0" stop-color="#e3b43a"/><stop offset="1" stop-color="#5aa860"/></linearGradient><linearGradient id="nv3" x1="0" y1="0" x2="1" y2="1"><stop offset="0" stop-color="#e38a35"/><stop offset="0.5" stop-color="#5a8fd6"/><stop offset="1" stop-color="#7ccbb8"/></linearGradient></defs><path d="M1.5 16.5C1 10 6 1.8 11 2.3C14.5 2.8 16.5 7 17 10.7" stroke="url(#nv1)" stroke-width="2.2" fill="none"/><path d="M17 10.7C17.5 6 19.5 4.5 21.3 5C25 6 28.5 12 27.4 21" stroke="url(#nv2)" stroke-width="2.2" fill="none"/><ellipse cx="15.7" cy="21.8" rx="10.3" ry="7.3" stroke="url(#nv3)" stroke-width="2.2" fill="none"/></svg>
<svg style="left:692px;top:1043px" width="32" height="26" viewBox="0 0 32 26"><defs><linearGradient id="wp" x1="0" y1="1" x2="0" y2="0"><stop offset="0" stop-color="#f6801f"/><stop offset="1" stop-color="#ef4b26"/></linearGradient></defs><path d="M0.5 1H8.5L15.5 20L12 24.5H8.5Z" fill="#e8261e"/><path d="M24.5 1H31.5L23 24.5H17.5Z" fill="#e8261e"/><path d="M12 24.5L18.5 1H24.5L17.5 24.5Z" fill="url(#wp)"/><path d="M24.3 1.5L20 13" stroke="#b51a14" stroke-width="0.9"/></svg>
<svg style="left:755px;top:1040px" width="34" height="33" viewBox="0 0 34 33"><circle cx="15" cy="14" r="13.2" fill="#5a5a5a"/><circle cx="21.2" cy="21.2" r="10.3" fill="#4a3438" stroke="#c83a40" stroke-width="1.2"/><path d="M13.6 19A8.6 8.6 0 0 1 24 12.8" stroke="#e6e6e6" stroke-width="1.3" fill="none"/><circle cx="21.6" cy="21.6" r="7.6" fill="#e3262e"/></svg>
<svg style="left:1414px;top:1043px" width="30" height="21" viewBox="0 0 30 21"><circle cx="20" cy="7" r="6.5" fill="#f9b21a"/><path d="M5 20C2 20 0.5 18 0.5 15.8C0.5 13.5 2.5 11.8 5 12C5.5 8 9 5.5 13 6C16 6.4 18.5 9 18.6 12C21 12 23 13.8 23 16C23 18.5 21 20 18.6 20Z" fill="#dfe5ee"/><path d="M5 20C2 20 0.5 18 0.5 15.8C4 17 14 17.6 23 16C23 18.5 21 20 18.6 20Z" fill="#c3ccd8"/></svg>
<div class="t" style="left:1452px;top:1046px;font-size:18.5px;color:#1a1a1a">38°C</div>
<div class="t" style="left:1502px;top:1045px;font-size:19px;color:#111">多云</div>
<svg style="left:1559px;top:1049px" width="18" height="11"><path d="M0.8 10L8.8 1.6L16.8 10" stroke="#111" stroke-width="1.3" fill="none"/></svg>
<svg style="left:1588px;top:1045px" width="22" height="21" viewBox="0 0 22 21"><path d="M1 4L18 0.8V16L1 18Z" stroke="#222" stroke-width="1.2" fill="none"/><path d="M5.6 9.2A4 4 0 0 1 12.6 7" stroke="#222" stroke-width="1.1" fill="none"/><path d="M12.9 4.6V7.4H10.2" stroke="#222" stroke-width="1.1" fill="none"/><path d="M12.4 10.6A4 4 0 0 1 5.6 12.6" stroke="#222" stroke-width="1.1" fill="none"/><path d="M5.2 15V12.3H7.9" stroke="#222" stroke-width="1.1" fill="none"/><circle cx="16.5" cy="16.5" r="4" fill="#f39019"/></svg>
<svg style="left:1618px;top:1046px" width="20" height="15" viewBox="0 0 20 15"><ellipse cx="7" cy="6" rx="6.5" ry="5.6" fill="#3cc46c"/><path d="M3 10L2.5 13.8L6.5 11Z" fill="#3cc46c"/><circle cx="4.6" cy="4.6" r="0.8" fill="#1e6e3c"/><circle cx="9.2" cy="4.6" r="0.8" fill="#1e6e3c"/><ellipse cx="14.5" cy="10.5" rx="4.2" ry="3.3" fill="#e4e4e4"/><circle cx="13.2" cy="10" r="0.6" fill="#999"/><circle cx="16" cy="10" r="0.6" fill="#999"/></svg>
<svg style="left:1647px;top:1047px" width="22" height="16" viewBox="0 0 22 16"><path d="M1.5 1V4M4 1V4" stroke="#111" stroke-width="1"/><path d="M0.5 4H5V7.5C5 8.8 4 9.6 2.8 9.6C1.5 9.6 0.5 8.8 0.5 7.5Z" stroke="#111" stroke-width="1" fill="none"/><path d="M2.8 9.6V15" stroke="#111" stroke-width="1.1"/><rect x="5.5" y="4.5" width="14" height="9.5" stroke="#111" stroke-width="1.1" fill="none"/><rect x="7" y="6" width="11" height="6.5" fill="#111"/><rect x="19.8" y="7" width="1.6" height="4.5" fill="#111"/></svg>
<svg style="left:1680px;top:1046px" width="18" height="17" viewBox="0 0 18 17"><path d="M1 15A15 15 0 0 1 16 1M4.5 15A11 11 0 0 1 15.5 4.5M8 15A7.5 7.5 0 0 1 15.5 8" stroke="#111" stroke-width="1.2" fill="none"/><circle cx="14.5" cy="14.5" r="1.6" fill="#111"/></svg>
<svg style="left:1707px;top:1046px" width="21" height="17" viewBox="0 0 21 17"><path d="M1 5.5H4.5L9.5 1V16L4.5 11.5H1Z" stroke="#111" stroke-width="1.2" fill="none" stroke-linejoin="round"/><path d="M12.5 5.5A3.5 3.5 0 0 1 12.5 11.5M15 3.5A6.5 6.5 0 0 1 15 13.5M17.5 1.5A9.5 9.5 0 0 1 17.5 15.5" stroke="#111" stroke-width="1.1" fill="none"/></svg>
<div class="t" style="left:1737px;top:1045px;font-size:18px;color:#111;-webkit-text-stroke:0.6px #111">中</div>
<div class="t" style="left:1788px;top:1036px;font-size:16px;color:#111">17:52</div>
<div class="t" style="left:1770px;top:1059px;font-size:16.5px;color:#111">2022/8/11</div>
<svg style="left:1869px;top:1045px" width="21" height="20" viewBox="0 0 21 20"><path d="M1 1H20V15H12L9 19L8 15H1Z" stroke="#111" stroke-width="1.2" fill="none"/></svg>
<div class="abs" style="left:1914px;top:1030px;width:1px;height:50px;background:#aaa"></div>
</body></html>
